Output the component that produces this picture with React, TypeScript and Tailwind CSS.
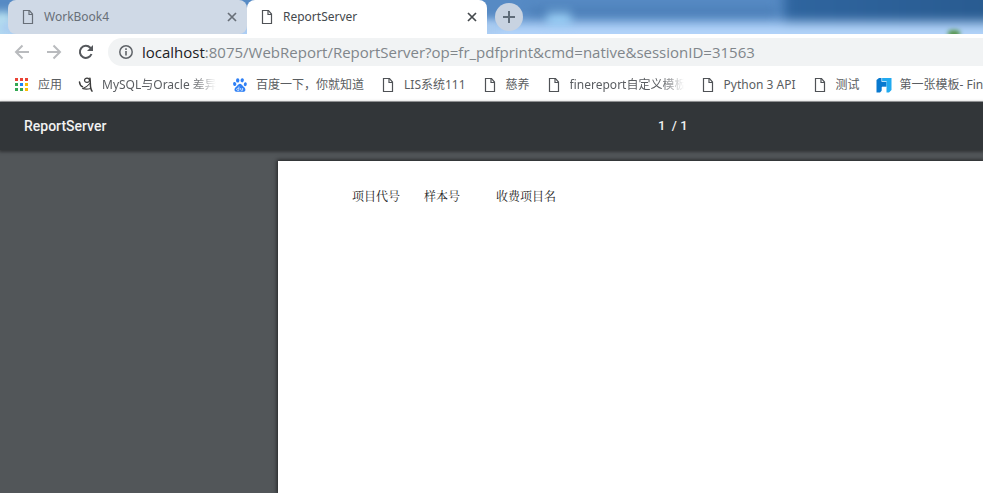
import React from "react";

type IconProps = { className?: string };

const PageIcon: React.FC<IconProps> = ({ className = "text-[#4f5256]" }) => (
  <svg viewBox="0 0 16 16" className={`h-4 w-4 shrink-0 ${className}`} fill="none" stroke="currentColor" aria-hidden="true">
    <path d="M3.5 1.5h6l3 3.5v9.5h-9z" strokeWidth="1.2" />
    <path d="M9 1.5V5.5h3.5" strokeWidth="1.2" />
  </svg>
);

const CloseIcon: React.FC = () => (
  <svg viewBox="0 0 16 16" className="h-4 w-4" stroke="currentColor" strokeWidth="1.7" aria-hidden="true">
    <path d="M5 4l8 8M13 4l-8 8" />
  </svg>
);

const AppsIcon: React.FC = () => (
  <svg viewBox="0 0 16 16" className="h-4 w-4 shrink-0" shapeRendering="crispEdges" aria-hidden="true">
    <path fill="#ea4335" d="M1 1h3v3H1zM6 1h3v3H6zM11 1h3v3h-3z" />
    <path fill="#34a853" d="M1 6h3v3H1zM1 11h3v3H1zM6 11h3v3H6z" />
    <path fill="#1a82f7" d="M6 6h3v3H6z" />
    <path fill="#fbbc05" d="M11 6h3v3h-3zM11 11h3v3h-3z" />
  </svg>
);

const SketchIcon: React.FC = () => (
  <svg viewBox="0 0 16 16" className="h-4 w-4 shrink-0" fill="none" stroke="#3c3c3c" strokeLinecap="round" aria-hidden="true">
    <path d="M1.500 5c.3 2.500 1.300 4.200 3 4.700" strokeWidth="1.500" />
    <path d="M4.800 11.500c2.500-.6 4.700-2.200 7-5" strokeWidth="1.100" />
    <ellipse cx="9" cy="3.300" rx="2.500" ry="2.100" strokeWidth="1.200" />
    <path d="M11.900 1.200c.6 3.500.3 6.500.7 9 .2 1.500.6 2.800 1.400 4" strokeWidth="1.500" />
    <path d="M5 11.700c2.500.6 5 .5 7.500-.2" strokeWidth="1.200" />
  </svg>
);

const BaiduIcon: React.FC = () => (
  <svg viewBox="0 0 16 16" className="h-4 w-4 shrink-0" fill="#2f80f5" aria-hidden="true">
    <ellipse cx="5.700" cy="3.400" rx="1.700" ry="2.200" />
    <ellipse cx="10.200" cy="3.300" rx="1.700" ry="2.100" transform="rotate(10 10.200 3.300)" />
    <ellipse cx="2.700" cy="7" rx="1.600" ry="2" transform="rotate(-15 2.700 7)" />
    <ellipse cx="13.300" cy="7.200" rx="1.500" ry="2" transform="rotate(10 13.300 7.200)" />
    <path d="M8 6.700c1.300 0 1.900 1.100 2.700 2.100 1.100 1.300 3 2.200 2.700 4.200-.3 2-2.100 2-3.400 1.800-1.300-.2-2.700-.2-4 0-1.400.2-3.200.1-3.500-1.800-.3-2 1.600-2.900 2.700-4.200.8-1 1.500-2.100 2.800-2.100z" />
    <path d="M6.900 9.500v3.900H5.700c-1.400 0-1.400-2.100 0-2.100h1.200M8.700 11v1.600c0 .5.300.7.700.7h1.200v-2.300" fill="none" stroke="#fff" strokeWidth=".7" />
  </svg>
);

const FineIcon: React.FC = () => (
  <svg viewBox="0 0 16 16" className="h-4 w-4 shrink-0" aria-hidden="true">
    <path fill="#0879cf" d="M3 1h3v3.500h4.500V10H6v3.500L4 15.500H.5V3z" />
    <path fill="#21aaf0" d="M6 1h9.500v12L13 15.500h-2.500v-11H6z" />
    <path d="M5.700 1v3.500h4.800M6 15.500V10h4.500" fill="none" stroke="#fff" strokeWidth=".6" />
  </svg>
);

const bookmarks = [
  { label: "应用", icon: <AppsIcon /> },
  { label: "MySQL与Oracle 差异", icon: <SketchIcon />, faded: true },
  { label: "百度一下，你就知道", icon: <BaiduIcon /> },
  { label: "LIS系统111", icon: <PageIcon /> },
  { label: "慈养", icon: <PageIcon /> },
  { label: "finereport自定义模板", icon: <PageIcon />, faded: true },
  { label: "Python 3 API", icon: <PageIcon /> },
  { label: "测试", icon: <PageIcon /> },
  { label: "第一张模板- FineReport", icon: <FineIcon /> },
];

const TabStrip: React.FC = () => (
  <div className="relative flex h-[34px] overflow-hidden bg-[#568ac4] pl-2">
    <div className="absolute -bottom-4 -right-8 -top-8 left-[784px] bg-linear-to-r from-[#2f659f] to-[#285a8f] blur-[6px]" />
    <div className="absolute -inset-x-4 -bottom-3 h-6 bg-[#b3d4fa] blur-[6px]" />
    <div className="absolute left-[547px] top-3 h-3 w-6 bg-[#a5daff] blur-[5px]" />
    <div className="absolute left-[530px] top-2 h-2 w-[245px] bg-[#3a6ca3]/40 blur-[5px]" />
    <div className="absolute -bottom-1 left-[948px] h-2 w-3 rounded-full bg-[#57964e] blur-[2px]" />
    <div className="absolute -left-2 top-3 h-6 w-5 bg-[#b6e0ef] blur-[4px]" />
    <div className="absolute bottom-0 left-0 h-3 w-[500px] bg-[#a9cbf0] blur-[4px]" />

    <div className="relative flex h-[34px] w-[239px] items-center rounded-lg bg-[#cfd9e6] px-3 text-[#686f78]">
      <PageIcon className="text-[#686f78]" />
      <span className="ml-2 flex-1 text-[12px]">WorkBook4</span>
      <button aria-label="Close WorkBook4" className="-mr-1">
        <CloseIcon />
      </button>
    </div>
    <div className="relative flex h-[34px] w-[240px] items-center rounded-t-lg bg-white px-3 text-[#45494d]">
      <PageIcon />
      <span className="ml-2 flex-1 text-[12px]">ReportServer</span>
      <button aria-label="Close ReportServer" className="-mr-1">
        <CloseIcon />
      </button>
    </div>
    <button
      aria-label="New tab"
      className="relative ml-2 mt-[3px] flex h-7 w-7 items-center justify-center rounded-full bg-[#c8d3e1]"
    >
      <svg viewBox="0 0 16 16" className="h-4 w-4" stroke="#5f6c79" strokeWidth="2" aria-hidden="true">
        <path d="M8 2v12M2 8h12" />
      </svg>
    </button>
  </div>
);

const AddressBar: React.FC = () => (
  <div className="flex h-9 items-center bg-white pl-[14px]">
    <div className="flex shrink-0 items-center gap-4 text-[#b9bbbe]">
      <button aria-label="Back">
        <svg viewBox="0 0 16 16" className="h-4 w-4" fill="none" stroke="currentColor" strokeWidth="2" aria-hidden="true">
          <path d="M15 8H2.500M8.500 1.500L2 8l6.500 6.500" />
        </svg>
      </button>
      <button aria-label="Forward">
        <svg viewBox="0 0 16 16" className="h-4 w-4" fill="none" stroke="currentColor" strokeWidth="2" aria-hidden="true">
          <path d="M1 8h12.500M7.500 1.500L14 8l-6.500 6.500" />
        </svg>
      </button>
      <button aria-label="Reload" className="text-[#55585c]">
        <svg viewBox="0 0 16 16" className="h-4 w-4" fill="none" stroke="currentColor" strokeWidth="2" aria-hidden="true">
          <path d="M13.500 10A6 6 0 1 1 12.300 3.800L14 5.500" />
          <path d="M15 1v6H9z" fill="currentColor" stroke="none" />
        </svg>
      </button>
    </div>
    <div className="ml-[14px] flex h-7 flex-1 items-center overflow-hidden rounded-l-full bg-[#f1f3f4] pl-[10px]">
      <svg viewBox="0 0 16 16" className="h-4 w-4 shrink-0" fill="none" stroke="#5f6368" aria-hidden="true">
        <circle cx="8" cy="8" r="6.200" strokeWidth="1.500" />
        <path d="M8 7v4.500M8 4.300v1.700" strokeWidth="1.600" />
      </svg>
      <a href="#report" className="ml-2 whitespace-nowrap font-['Open_Sans',sans-serif] text-[15px] leading-5 text-[#80868b]">
        <span className="text-[#202124]">localhost</span>
        :8075/WebReport/ReportServer?op=fr_pdfprint&amp;cmd=native&amp;sessionID=31563
      </a>
    </div>
  </div>
);

const BookmarkBar: React.FC = () => (
  <nav className="flex h-8 items-center gap-4 overflow-hidden border-b border-[#a9abad] bg-white pb-[2px] pl-[14px]">
    {bookmarks.map((item) => (
      <a key={item.label} href="#bookmark" className="flex shrink-0 items-center gap-2 text-[12px] text-[#5a5d61]">
        {item.icon}
        <span
          className={
            item.faded
              ? "w-[114px] overflow-hidden whitespace-nowrap mask-r-from-80% mask-r-to-100%"
              : "whitespace-nowrap"
          }
        >
          {item.label}
        </span>
      </a>
    ))}
  </nav>
);

const App: React.FC = () => {
  return (
    <div className="flex min-h-screen flex-col overflow-hidden bg-[#525659] font-['Noto_Sans','Noto_Sans_CJK_SC',sans-serif]">
      <TabStrip />
      <AddressBar />
      <BookmarkBar />
      <header className="relative flex h-12 items-center bg-[#323639] pl-6 font-['Roboto',sans-serif] text-[#f1f1f1] shadow-[0_1px_3px_1px_rgba(0,0,0,0.4)]">
        <h1 className="w-[634px] shrink-0 text-[14px] font-medium">ReportServer</h1>
        <span className="whitespace-pre text-[13px] font-medium">1  / 1</span>
      </header>
      <main className="mt-[11px] flex flex-1 pl-[278px]">
        <div className="flex-1 bg-white pl-[74px] pt-[26px] shadow-[0_0_4px_1px_rgba(0,0,0,0.6)]">
          <table className="font-['Noto_Serif_CJK_SC','Noto_Sans_CJK_SC',serif] text-[12px] leading-[18px] text-[#222]">
            <thead>
              <tr className="text-left">
                <th className="w-[72px] font-normal">项目代号</th>
                <th className="w-[72px] font-normal">样本号</th>
                <th className="font-normal">收费项目名</th>
              </tr>
            </thead>
          </table>
        </div>
      </main>
    </div>
  );
};

export default App;
